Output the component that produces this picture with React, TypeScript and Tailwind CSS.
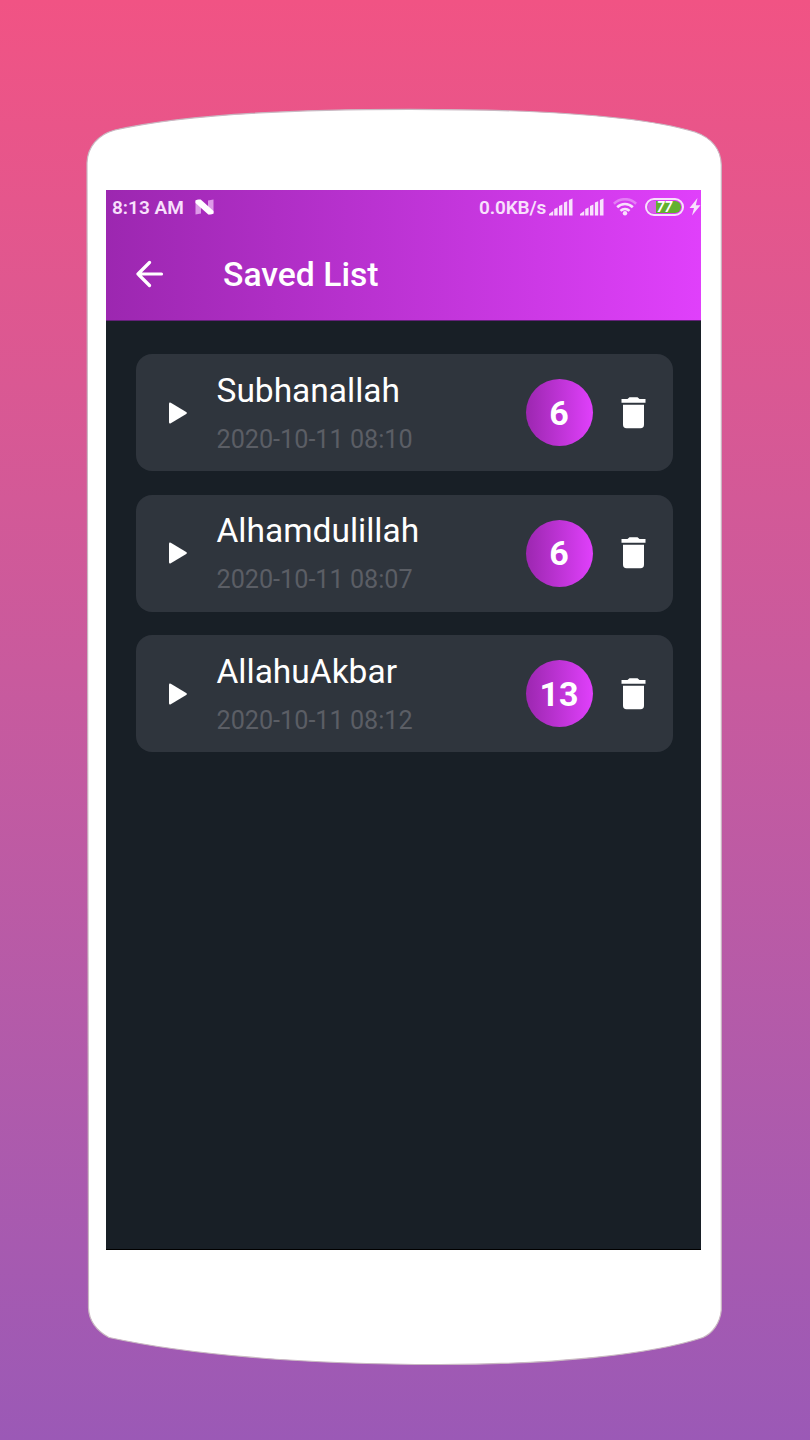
const items = [
  { title: "Subhanallah", date: "2020-10-11 08:10", count: 6 },
  { title: "Alhamdulillah", date: "2020-10-11 08:07", count: 6 },
  { title: "AllahuAkbar", date: "2020-10-11 08:12", count: 13 },
];

function PhoneBody() {
  return (
    <svg className="absolute inset-0" width="810" height="1440" viewBox="0 0 810 1440" aria-hidden="true">
      <path
        d="M87 163C87.500 147 98 134.500 115 130C180 115 290 109.300 410 109.300C530 109.300 640 115.500 695 132C712 138 721 150 721.300 165V1310C720 1323 713 1333 703 1337.500C650 1355 550 1364.500 440 1364.500C300 1364.500 185 1354 109 1337.500C97 1331 89 1321 88.500 1308Z"
        fill="#fff"
        stroke="#c9b8c2"
        strokeWidth="1.200"
      />
    </svg>
  );
}

function Signal() {
  return (
    <svg width="24" height="18" viewBox="0 0 24 18" fill="currentColor" aria-hidden="true">
      <path d="M0 17.500v-1.500l4.200-3v4.500zM5.200 17.500v-6.500l3.400-1.400v7.900zM10 17.500v-9.600l3.400-1.400v11zM14.900 17.500v-13l3.300-1.300v14.300zM19.900 17.500v-15.600l3.600-1.400v17z" />
    </svg>
  );
}

function Wifi() {
  return (
    <svg width="24" height="18" viewBox="0 0 24 18" fill="none" stroke="currentColor" strokeWidth="2.600" aria-hidden="true">
      <path d="M.9 5.700C7-.3 17-.3 23.100 5.700" opacity=".4" />
      <path d="M4.200 9.200C8.500 5 15.500 5 19.800 9.200M7.500 12.900C10 10.300 14 10.300 16.500 12.900" />
      <circle cx="12" cy="15.300" r="2.200" fill="currentColor" stroke="none" />
    </svg>
  );
}

function StatusBar() {
  return (
    <div className="flex h-[34px] items-center pl-[6px] text-[#f8e0fc]">
      <span className="w-[73px] text-[19px] font-semibold leading-none whitespace-nowrap">8:13 AM</span>
      <svg className="ml-[10px]" width="19" height="16" viewBox="0 0 19 16" aria-hidden="true">
        <path d="M.5 1.500L6 .5V14.500L.5 15.500ZM13 1.500L18.500.5V14.500L13 15.500Z" fill="#dd9ae8" />
        <path d="M.5 1.500Q3-.3 6 .8L18.500 12V14.500Q16 16.300 13 15.200L.5 4Z" fill="#fff" />
      </svg>
      <span className="ml-[265px] w-[70px] text-[19px] font-semibold leading-none tracking-[-0.15px] whitespace-nowrap">0.0KB/s</span>
      <Signal />
      <div className="ml-[7px]"><Signal /></div>
      <div className="ml-[9px]"><Wifi /></div>
      <div className="ml-[8px] flex h-[18px] w-[39px] items-center rounded-full border-2 border-[#f8e0fc] p-px">
        <div className="flex h-[12px] w-full items-center justify-center rounded-full bg-linear-to-r from-[#d65ee8] from-25% to-[#62b12f] to-25% text-[14px] leading-none font-bold text-white italic">77</div>
      </div>
      <svg className="ml-[5px] shrink-0" width="12" height="18" viewBox="0 0 12 18" fill="currentColor" aria-hidden="true">
        <path d="M8.500 0L.5 10H5L3 17.500L11.500 7.200H6.800Z" />
      </svg>
    </div>
  );
}

function SavedItem({ title, date, count }: (typeof items)[number]) {
  return (
    <li className="flex h-[117px] items-center rounded-[16px] bg-[#2f353d] pl-[33px]">
      <svg width="19" height="22" viewBox="0 0 19 22" fill="#fff" aria-hidden="true">
        <path d="M0 1.800Q0-.1 1.800.7L17.200 10Q18.600 11 17.200 12L1.800 21.300Q0 22 0 20.200Z" />
      </svg>
      <div className="ml-[28.5px] w-[309px] whitespace-nowrap">
        <h2 className="text-[33.5px] leading-[39px] text-white">{title}</h2>
        <p className="mt-[15px] text-[25.2px] leading-[30px] text-[#5b5e65]">{date}</p>
      </div>
      <span className="flex size-[67px] items-center justify-center rounded-full bg-linear-to-r from-[#9c27b0] to-[#e040fb] pt-px text-[34px] font-bold text-white">
        {count}
      </span>
      <svg className="ml-[28px]" width="25" height="32" viewBox="0 0 25 32" fill="#fff" aria-hidden="true">
        <path d="M.5 2H6.500L8.500.3H16.500L18.500 2H24.500V5.700H.5ZM2 7.700H23V27.500Q23 31.300 19.500 31.300H5.500Q2 31.300 2 27.500Z" />
      </svg>
    </li>
  );
}

export default function App() {
  return (
    <div className="relative h-[1440px] w-[810px] overflow-hidden bg-linear-to-b from-[#f15384] to-[#9b59b6] pt-[190px] pl-[106px] font-['Roboto',sans-serif]">
      <PhoneBody />
      <main className="relative h-[1060px] w-[595px] overflow-hidden border-b border-black bg-[#181f26]">
        <header className="h-[131px] border-b border-[#65207a] bg-linear-to-r from-[#9c27b0] to-[#e040fb]">
          <StatusBar />
          <div className="flex h-[100px] items-center pl-[30px]">
            <svg width="28" height="28" viewBox="0 0 28 28" fill="none" stroke="#fff" strokeWidth="3.200" strokeLinecap="round" strokeLinejoin="round" aria-hidden="true">
              <path d="M25.500 14H2M13.500 2.500L2 14L13.500 25.500" />
            </svg>
            <h1 className="ml-[59px] pt-px text-[33.7px] leading-none font-medium whitespace-nowrap text-white">Saved List</h1>
          </div>
        </header>
        <ul className="flex flex-col gap-[23.5px] pt-[33px] pr-[28px] pl-[30px]">
          {items.map((item) => (
            <SavedItem key={item.title} {...item} />
          ))}
        </ul>
      </main>
    </div>
  );
}
